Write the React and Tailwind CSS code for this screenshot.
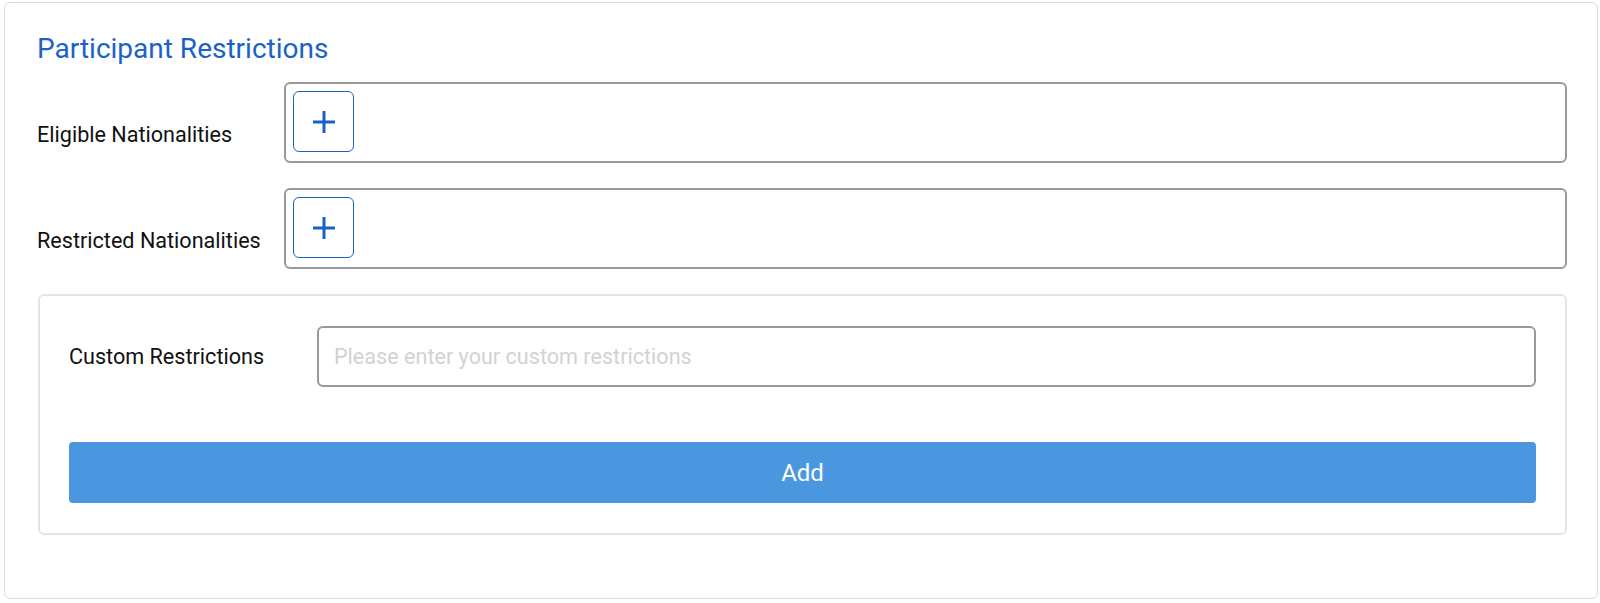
import React from 'react';

function PlusButton() {
  return (
    <button className="w-[61px] h-[61px] rounded-[6px] border border-[#1a62c6] bg-white flex items-center justify-center">
      <svg width="26" height="26" viewBox="0 0 26 26" fill="none">
        <path d="M13 2v22M2 13h22" stroke="#1a62c6" strokeWidth="3" />
      </svg>
    </button>
  );
}

function NationalityRow({ label }) {
  return (
    <div className="flex">
      <div className="w-[247px] pt-[25px] self-center text-[21.6px] leading-[26px] text-[#111]">{label}</div>
      <div className="flex-1 h-[81px] rounded-[6px] border-2 border-[#9a9a9a] p-[7px]">
        <PlusButton />
      </div>
    </div>
  );
}

export default function App() {
  return (
    <div className="w-[1600px] h-[603px] bg-white pl-[4px] pt-[2px] pr-[2px]" style={{ fontFamily: 'Roboto, "Liberation Sans", sans-serif' }}>
      <div className="h-[597px] rounded-[6px] border border-[#dcdcdc] bg-white pl-[32px] pr-[30px] pt-[30px]">
        <h2 className="text-[28px] leading-[32px] text-[#1a62c6]">Participant Restrictions</h2>

        <div className="mt-[17px] flex flex-col gap-[25px]">
          <NationalityRow label="Eligible Nationalities" />
          <NationalityRow label="Restricted Nationalities" />
        </div>

        <div className="mt-[25px] ml-[1px] h-[241px] rounded-[6px] border-2 border-[#e4e4e4] px-[29px] pt-[30px]">
          <div className="flex items-center">
            <div className="w-[248px] text-[21.6px] leading-[26px] text-[#111]">Custom Restrictions</div>
            <input
              className="flex-1 h-[61px] rounded-[6px] border-2 border-[#9a9a9a] px-[15px] text-[21.6px] outline-none placeholder:text-[#d2d2d2]"
              placeholder="Please enter your custom restrictions"
            />
          </div>
          <button className="mt-[55px] w-full h-[61px] rounded-[4px] bg-[#4a97e0] text-white text-[24px]">
            Add
          </button>
        </div>
      </div>
    </div>
  );
}
